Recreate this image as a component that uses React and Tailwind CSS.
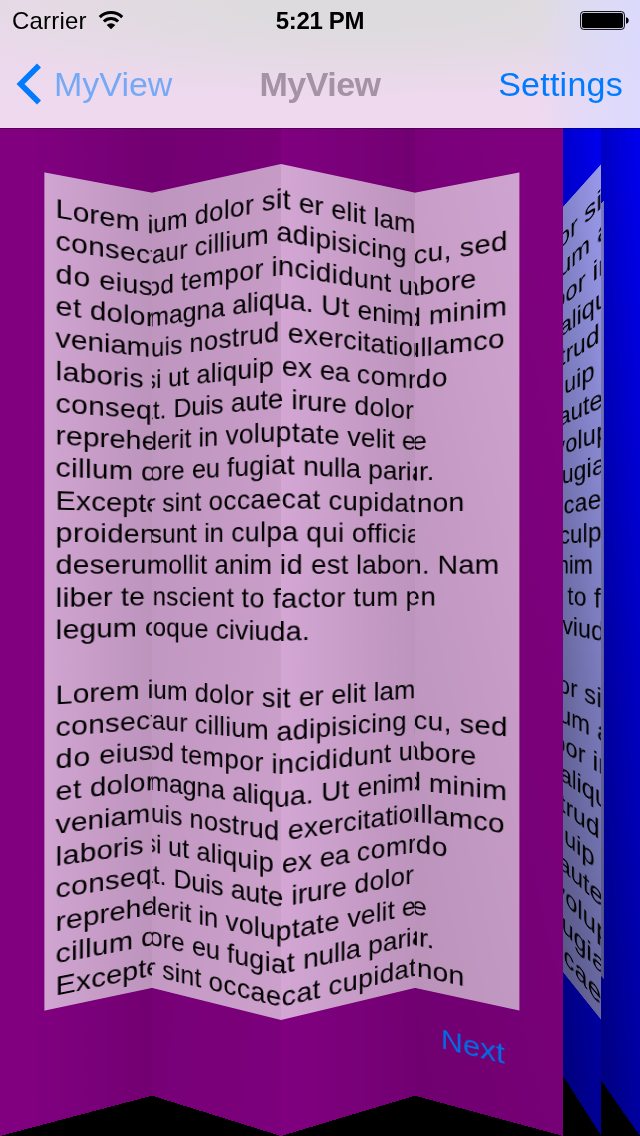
import React from 'react';

const PAGE_HEIGHT = 1136;
const HORIZON = PAGE_HEIGHT / 2;
const TEXT_LEFT = 57.5;
const FONT_SIZE = 28;
const FIRST_BASELINE = 208.6;
const LEADING = 33.3;

// Advance widths, in thousandths of an em, of the page's type and of the fallback face.
const ADVANCE = {
  a: 537, b: 593, c: 537, d: 593, e: 537, f: 296, g: 574, h: 556, i: 222, l: 222,
  m: 853, n: 556, o: 574, p: 593, q: 593, r: 333, s: 500, t: 315, u: 556, v: 500,
  w: 758, x: 518, L: 537, D: 704, U: 722, N: 741, E: 593, ' ': 278, ',': 278, '.': 278,
};
const FALLBACK = {
  a: 556, b: 556, c: 500, d: 556, e: 556, f: 278, g: 556, h: 556, i: 222, l: 222,
  m: 833, n: 556, o: 556, p: 556, q: 556, r: 333, s: 500, t: 278, u: 556, v: 500,
  w: 722, x: 500, L: 556, D: 722, U: 722, N: 722, E: 667, ' ': 278, ',': 278, '.': 278,
};

const PARAGRAPH = [
  'Lorem ipsum dolor sit er elit lamet,',
  'consectetaur cillium adipisicing pecu, sed',
  'do eiusmod tempor incididunt ut labore',
  'et dolore magna aliqua. Ut enim ad minim',
  'veniam, quis nostrud exercitation ullamco',
  'laboris nisi ut aliquip ex ea commodo',
  'consequat. Duis aute irure dolor in',
  'reprehenderit in voluptate velit esse',
  'cillum dolore eu fugiat nulla pariatur.',
  'Excepteur sint occaecat cupidatat non',
  'proident, sunt in culpa qui officia',
  'deserunt mollit anim id est laborum. Nam',
  'liber te conscient to factor tum poen',
  'legum odioque civiuda.',
];
const LINES = [...PARAGRAPH, '', ...PARAGRAPH.slice(0, 10)];

const measure = (text, table) =>
  [...text].reduce((sum, ch) => sum + (table[ch] ?? 556), 0) * FONT_SIZE / 1000;

function layoutWords(line) {
  let x = TEXT_LEFT;
  return line.split(' ').filter(Boolean).map((word) => {
    const width = measure(word, ADVANCE);
    const item = { word, x, width, spacing: (width - measure(word, FALLBACK)) / word.length };
    x += width + measure(' ', ADVANCE);
    return item;
  });
}

// Each fold shows the page slice [from, to] between two screen edges;
// scale is the apparent size of the page at either edge.
const PURPLE_FOLDS = [
  { from: 8.4, to: 149.2, left: 0, right: 152, scale: [1, 0.929],
    shade: 'bg-[linear-gradient(90deg,rgba(0,0,0,0)_20%,rgba(0,0,0,0.11)_100%)]' },
  { from: 179.9, to: 320.3, left: 152, right: 281, scale: [0.929, 1],
    shade: 'bg-[linear-gradient(97deg,rgba(0,0,0,0.11)_0%,rgba(0,0,0,0.07)_50%,rgba(0,0,0,0.03)_100%)]' },
  { from: 320.3, to: 458.8, left: 281, right: 415, scale: [1, 0.929],
    shade: 'bg-[linear-gradient(90deg,rgba(0,0,0,0)_0%,rgba(0,0,0,0.11)_100%)]' },
  { from: 490.6, to: 630.8, left: 415, right: 563, scale: [0.929, 1],
    shade: 'bg-[linear-gradient(78deg,rgba(0,0,0,0.13)_0%,rgba(0,0,0,0.06)_50%,rgba(0,0,0,0.01)_85%)]' },
];
const BLUE_FOLDS = [
  { from: 273.5, to: 320.5, left: 563, right: 601.3, scale: [0.894, 1],
    shade: 'bg-[linear-gradient(90deg,rgba(0,0,0,0.16),rgba(0,0,0,0)),linear-gradient(180deg,rgba(0,0,0,0.04)_5%,rgba(0,0,0,0.42)_100%)]' },
  { from: 588, to: 629.5, left: 601.3, right: 640, scale: [0.903, 1],
    shade: 'bg-[linear-gradient(90deg,rgba(0,0,0,0.2),rgba(0,0,0,0)),linear-gradient(180deg,rgba(0,0,0,0.04)_5%,rgba(0,0,0,0.38)_100%)]' },
];

function foldMatrix({ from, to, left, right, scale }) {
  const w = to - from;
  const [s0, s1] = scale;
  const g = (s0 / s1 - 1) / w;
  const a = (right * (1 + g * w) - left) / w;
  return `matrix3d(${a},${HORIZON * g},0,${g},0,${s0},0,0,0,0,1,0,${left},${HORIZON * (1 - s0)},0,1)`;
}

function PageContent({ from, to }) {
  return (
    <>
      <div
        className="absolute top-[164px] h-[856px] w-[544.5px] bg-white/65"
        style={{ left: 46.9 - from }}
      />
      {LINES.map((line, row) =>
        layoutWords(line)
          .filter((item) => item.x < to && item.x + item.width > from)
          .map((item) => (
            <span
              key={`${row}-${item.x}`}
              className="absolute whitespace-nowrap text-[28px] leading-[32px] text-black"
              style={{
                left: item.x - from,
                top: FIRST_BASELINE + row * LEADING - 25.6,
                letterSpacing: `${item.spacing}px`,
              }}
            >
              {item.word}
            </span>
          ))
      )}
    </>
  );
}

function Fold({ fold, tint, children }) {
  return (
    <section
      className={`absolute left-0 top-0 h-[1136px] origin-top-left overflow-hidden ${tint}`}
      style={{ width: fold.to - fold.from, transform: foldMatrix(fold) }}
    >
      <PageContent from={fold.from} to={fold.to} />
      {children}
      <div className={`absolute inset-0 ${fold.shade}`} />
    </section>
  );
}

function StatusBar() {
  return (
    <div className="grid h-10 grid-cols-3 items-center pt-[2px] text-[24px] leading-none text-black">
      <div className="flex items-center gap-[11px] pl-3">
        <span className="tracking-[0.2px]">Carrier</span>
        <svg className="-mt-[2px]" width="26" height="20" viewBox="0 0 26 20" fill="none" stroke="#000" strokeWidth="3.1">
          <path d="M1.8 7.1a16 16 0 0 1 22.4 0" />
          <path d="M5.9 11.5a10 10 0 0 1 14.2 0" />
          <path d="M13 19.3l-4.3-4.4a6.2 6.2 0 0 1 8.6 0z" fill="#000" stroke="none" />
        </svg>
      </div>
      <span className="text-center font-bold tracking-[-0.35px]">5:21 PM</span>
      <div className="flex justify-end pr-[11px]">
        <svg className="-mt-[2px]" width="49" height="19" viewBox="0 0 49 19">
          <rect x="0.6" y="0.6" width="43.8" height="17.8" rx="3" fill="none" stroke="#000" strokeWidth="1" />
          <rect x="2" y="2" width="41" height="15" rx="1.8" fill="#000" />
          <path d="M46 6.2c2 .5 2.7 1.8 2.7 3.3s-.7 2.8-2.7 3.3z" fill="#000" />
        </svg>
      </div>
    </div>
  );
}

function NavBar() {
  return (
    <nav className="grid h-[88px] grid-cols-[1fr_auto_1fr] items-center text-[34px] leading-none">
      <div className="flex items-center gap-[12px] pl-4 text-[#007aff]">
        <svg width="26" height="42" viewBox="0 0 26 42" fill="none" stroke="currentColor" strokeWidth="5.6">
          <path d="M23 2.5L4.5 21 23 39.5" />
        </svg>
        <span className="opacity-50">MyView</span>
      </div>
      <span className="font-bold tracking-[-0.5px] text-[#a393a5]">MyView</span>
      <span className="pr-[17px] text-right tracking-[0.25px] text-[#007aff]">Settings</span>
    </nav>
  );
}

export default function App() {
  return (
    <main className="relative h-[1136px] w-[640px] overflow-hidden bg-black font-['Liberation_Sans',Arial,sans-serif]">
      <div className="absolute inset-0">
        {BLUE_FOLDS.map((fold) => (
          <Fold key={fold.left} fold={fold} tint="bg-[#0000ff]" />
        ))}
        {PURPLE_FOLDS.map((fold, index) => (
          <Fold key={fold.left} fold={fold} tint="bg-[#800080]">
            {index === 3 && (
              <button className="absolute left-[26px] top-[1052px] text-[30px] leading-[32px] text-[#007aff]">
                Next
              </button>
            )}
          </Fold>
        ))}
      </div>
      <header className="relative h-32 shadow-[0_1px_0_rgba(0,0,0,0.3)] bg-[linear-gradient(90deg,rgba(218,218,255,0)_84%,rgba(218,218,255,0.5)_90%,rgba(218,218,255,0.9)_100%),radial-gradient(ellipse_75%_75%_at_58%_0%,#dedbde_30%,rgba(222,219,222,0)_100%),linear-gradient(180deg,#ead9ea,#efd9ef)]">
        <StatusBar />
        <NavBar />
      </header>
    </main>
  );
}
